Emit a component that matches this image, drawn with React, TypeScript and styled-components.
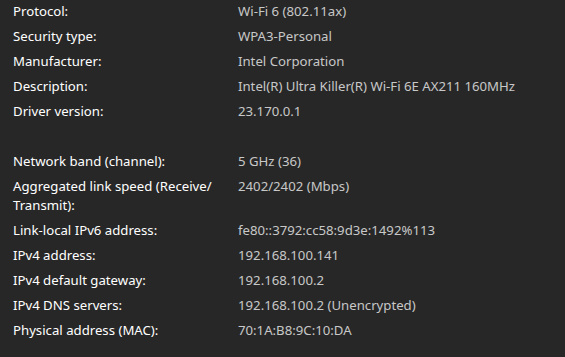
import styled, { createGlobalStyle } from 'styled-components'

type Entry = { label: string; value: string }

const firstGroup: Entry[] = [
  { label: 'Protocol:', value: 'Wi-Fi 6 (802.11ax)' },
  { label: 'Security type:', value: 'WPA3-Personal' },
  { label: 'Manufacturer:', value: 'Intel Corporation' },
  { label: 'Description:', value: 'Intel(R) Ultra Killer(R) Wi-Fi 6E AX211 160MHz' },
  { label: 'Driver version:', value: '23.170.0.1' },
]

const secondGroup: Entry[] = [
  { label: 'Network band (channel):', value: '5 GHz (36)' },
  { label: 'Aggregated link speed (Receive/ Transmit):', value: '2402/2402 (Mbps)' },
  { label: 'Link-local IPv6 address:', value: 'fe80::3792:cc58:9d3e:1492%113' },
  { label: 'IPv4 address:', value: '192.168.100.141' },
  { label: 'IPv4 default gateway:', value: '192.168.100.2' },
  { label: 'IPv4 DNS servers:', value: '192.168.100.2 (Unencrypted)' },
  { label: 'Physical address (MAC):', value: '70:1A:B8:9C:10:DA' },
]

const PropertyList = ({ entries }: { entries: Entry[] }) => (
  <Group>
    {entries.map((e) => (
      <Row key={e.label}>
        <Label>{e.label}</Label>
        <Value>{e.value}</Value>
      </Row>
    ))}
  </Group>
)

const App = () => (
  <>
    <GlobalStyle />
    <Panel>
      <PropertyList entries={firstGroup} />
      <PropertyList entries={secondGroup} />
    </Panel>
  </>
)

export default App

const GlobalStyle = createGlobalStyle`
  html, body {
    margin: 0;
    background: #272727;
  }
`

const Panel = styled.div`
  width: 565px;
  height: 357px;
  box-sizing: border-box;
  padding: 0 13px;
  background: #272727;
  font-family: 'Noto Sans', 'Open Sans', sans-serif;
  font-size: 13.2px;
  line-height: 19px;
  display: flex;
  flex-direction: column;
  gap: 25px;
  overflow: hidden;
`

const Group = styled.div`
  display: flex;
  flex-direction: column;
`

const Row = styled.div`
  display: grid;
  grid-template-columns: 213px 1fr;
  column-gap: 12px;
  padding: 2px 0 4px;
`

const Label = styled.div`
  color: #ffffff;
`

const Value = styled.div`
  color: #c8c8c8;
`
